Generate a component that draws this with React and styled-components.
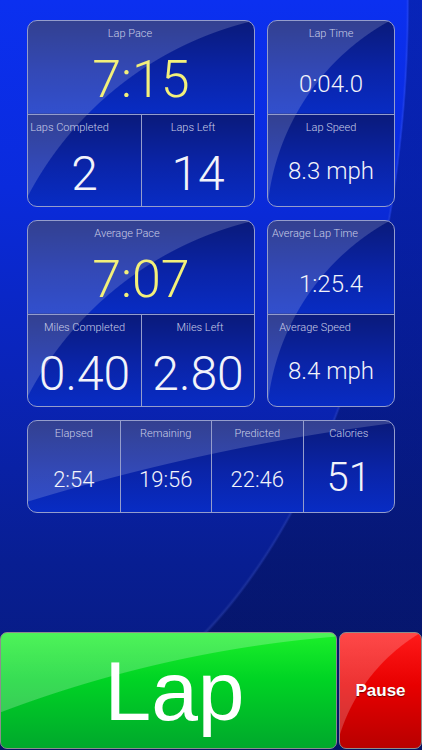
import React from 'react'
import styled, { createGlobalStyle } from 'styled-components'

const edge = '#949dcc'

const GlobalStyle = createGlobalStyle`
  html, body {
    margin: 0;
    padding: 0;
    background: #07185e;
  }
  * {
    box-sizing: border-box;
  }
`

const Screen = styled.div`
  width: 422px;
  height: 750px;
  display: flex;
  flex-direction: column;
  overflow: hidden;
  font-family: Roboto, "Liberation Sans", sans-serif;
  background:
    radial-gradient(97% 98% at 0% 0%, transparent 99.2%, rgba(190, 205, 255, 0.1) 99.6%, rgba(0, 6, 40, 0.28) 100%),
    linear-gradient(180deg, #0b30f0 0%, #0a2bdc 25%, #0a24b8 50%, #081e92 75%, #071a7a 100%);
`

const Board = styled.div`
  display: grid;
  grid-template-columns: 228px 128px;
  column-gap: 12px;
  row-gap: 13px;
  padding: 20px 0 0 27px;
`

const Panel = styled.div`
  grid-column: ${p => (p.$wide ? '1 / -1' : 'auto')};
  height: ${p => p.$height}px;
  display: grid;
  grid-template-columns: repeat(${p => p.$cols}, 1fr);
  grid-template-rows: repeat(${p => p.$rows}, 1fr);
  border: 1.5px solid ${edge};
  border-radius: 10px;
  overflow: hidden;
  background:
    radial-gradient(circle ${p => p.$gr}px at ${p => p.$gx}px ${p => p.$gy}px, transparent ${p => p.$gr - 1}px, rgba(255, 255, 255, 0.17) ${p => p.$gr}px),
    linear-gradient(180deg, #0a1a7a 0%, #0a24a8 55%, #082cc4 100%);
  background-size: 100% 100%, 100% ${p => 100 / p.$rows}%;
  background-repeat: no-repeat, repeat-y;
`

const Cell = styled.div`
  grid-column: span ${p => p.$span || 1};
  display: flex;
  flex-direction: column;
  min-width: 0;
  border-left: ${p => (p.$left ? `1px solid ${edge}` : 'none')};
  border-top: ${p => (p.$top ? `1px solid ${edge}` : 'none')};
`

const Label = styled.div`
  padding-top: 6px;
  font-size: 11px;
  line-height: 13px;
  font-weight: 300;
  color: #c9cde6;
  text-align: center;
  white-space: nowrap;
  transform: translateX(${p => p.$shift || 0}px);
`

const Value = styled.div`
  flex: 1;
  display: flex;
  align-items: center;
  justify-content: center;
  padding-top: ${p => p.$dy ?? 6}px;
  font-size: ${p => p.$size}px;
  font-weight: 300;
  line-height: 1;
  white-space: nowrap;
  color: ${p => (p.$yellow ? '#f3f07a' : '#f2f3fa')};
`

const Controls = styled.div`
  margin-top: auto;
  margin-bottom: 1px;
  height: 117px;
  display: flex;
  gap: 2px;
`

const LapButton = styled.button`
  width: 337px;
  padding: 0 0 0 12px;
  border: 1px solid #8d8d8d;
  border-radius: 7px;
  color: #fff;
  font-family: "Liberation Sans", Arial, sans-serif;
  font-size: 84px;
  line-height: 1;
  background:
    radial-gradient(circle 1228px at 435px 1227px, transparent 1227px, rgba(255, 255, 255, 0.22) 1228px),
    linear-gradient(180deg, #1cf02a 0%, #00d424 40%, #00a82c 100%);
`

const PauseButton = styled.button`
  flex: 1;
  padding: 0;
  border: 1px solid #8d8d8d;
  border-radius: 7px;
  color: #fff;
  font-family: "Liberation Sans", Arial, sans-serif;
  font-size: 17px;
  font-weight: 700;
  text-shadow: 0 1px 1px rgba(60, 0, 0, 0.7);
  background:
    radial-gradient(circle 182px at 173px 156px, transparent 181px, rgba(255, 255, 255, 0.2) 182px),
    linear-gradient(180deg, #ff1a1a 0%, #e80000 45%, #b80000 100%);
`

const paceGloss = { $gr: 345, $gx: 305, $gy: 335 }
const sideGloss = { $gr: 238, $gx: 236, $gy: 208 }

const PacePanel = ({ title, pace, leftLabel, leftValue, rightLabel, rightValue, shifts }) => (
  <Panel $height={187} $cols={2} $rows={2} {...paceGloss}>
    <Cell $span={2}>
      <Label $shift={shifts[0]}>{title}</Label>
      <Value $size={52} $yellow>{pace}</Value>
    </Cell>
    <Cell $top>
      <Label $shift={shifts[1]}>{leftLabel}</Label>
      <Value $size={48} $dy={8}>{leftValue}</Value>
    </Cell>
    <Cell $top $left>
      <Label $shift={shifts[2]}>{rightLabel}</Label>
      <Value $size={48} $dy={8}>{rightValue}</Value>
    </Cell>
  </Panel>
)

const SidePanel = ({ topLabel, topValue, bottomLabel, bottomValue, shifts }) => (
  <Panel $height={187} $cols={1} $rows={2} {...sideGloss}>
    <Cell>
      <Label $shift={shifts[0]}>{topLabel}</Label>
      <Value $size={24} $dy={14}>{topValue}</Value>
    </Cell>
    <Cell $top>
      <Label $shift={shifts[1]}>{bottomLabel}</Label>
      <Value $size={24} $dy={2}>{bottomValue}</Value>
    </Cell>
  </Panel>
)

const totals = [
  { label: 'Elapsed', value: '2:54', size: 22 },
  { label: 'Remaining', value: '19:56', size: 22 },
  { label: 'Predicted', value: '22:46', size: 22 },
  { label: 'Calories', value: '51', size: 40 },
]

export default function App() {
  return (
    <>
      <GlobalStyle />
      <Screen>
        <Board>
          <PacePanel
            title="Lap Pace"
            pace="7:15"
            leftLabel="Laps Completed"
            leftValue="2"
            rightLabel="Laps Left"
            rightValue="14"
            shifts={[-11, -15, -5]}
          />
          <SidePanel
            topLabel="Lap Time"
            topValue="0:04.0"
            bottomLabel="Lap Speed"
            bottomValue="8.3 mph"
            shifts={[0, 0]}
          />
          <PacePanel
            title="Average Pace"
            pace="7:07"
            leftLabel="Miles Completed"
            leftValue="0.40"
            rightLabel="Miles Left"
            rightValue="2.80"
            shifts={[-14, 0, 2]}
          />
          <SidePanel
            topLabel="Average Lap Time"
            topValue="1:25.4"
            bottomLabel="Average Speed"
            bottomValue="8.4 mph"
            shifts={[-16, -16]}
          />
          <Panel $wide $height={93} $cols={4} $rows={1} $gr={2201} $gx={643} $gy={2185}>
            {totals.map((t, i) => (
              <Cell key={t.label} $left={i > 0}>
                <Label>{t.label}</Label>
                <Value $size={t.size} $dy={t.size > 30 ? 4 : 8}>{t.value}</Value>
              </Cell>
            ))}
          </Panel>
        </Board>
        <Controls>
          <LapButton type="button">Lap</LapButton>
          <PauseButton type="button">Pause</PauseButton>
        </Controls>
      </Screen>
    </>
  )
}
